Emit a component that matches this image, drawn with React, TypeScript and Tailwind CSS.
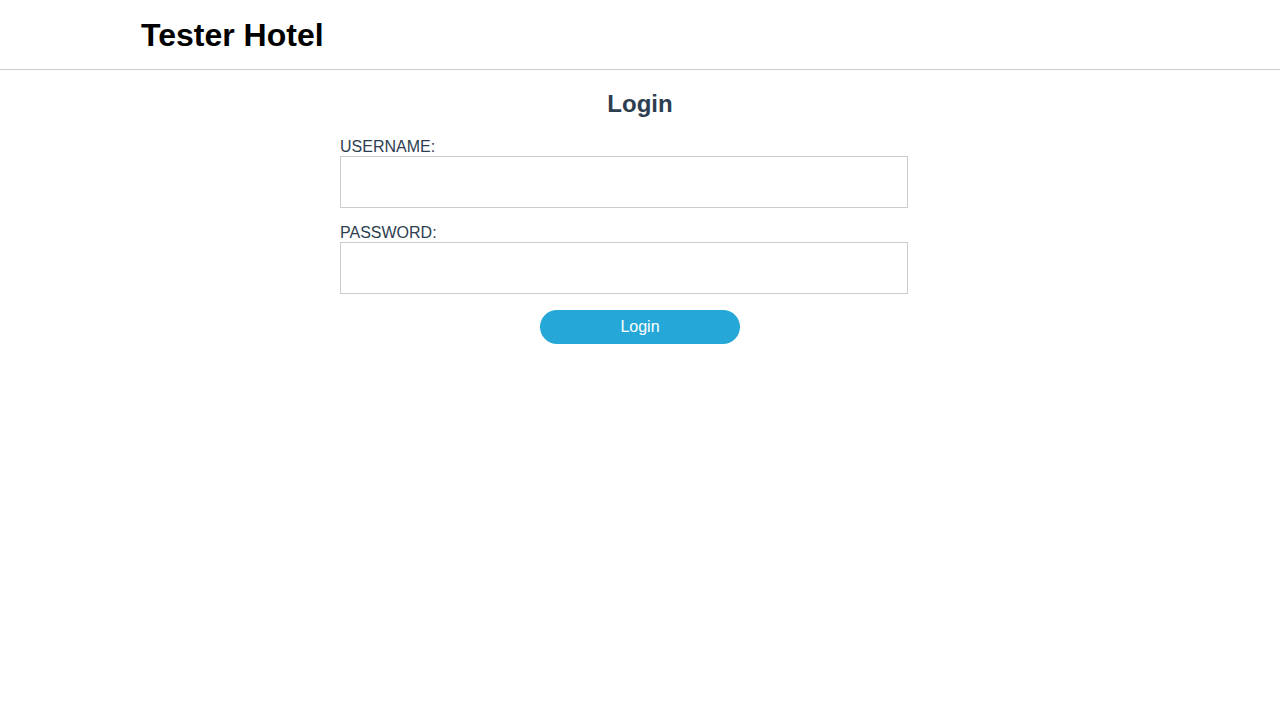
import React from 'react';

const Field = ({ label, type }: { label: string, type: string }) => (
    <div className="flex flex-col">
        <label className="text-[16px] leading-[18px] text-[#2c3e50]">{label}</label>
        <input type={type} className="w-[568px] h-[52px] border border-[#cccccc] bg-white outline-none px-2" />
    </div>
);

export default function App() {
    return (
        <div className="min-h-screen bg-white" style={{ fontFamily: '"Liberation Sans", Arial, sans-serif' }}>
            <header className="h-[70px] border-b border-[#cccccc]">
                <div className="w-[1000px] mx-auto h-full flex items-center">
                    <h1 className="text-[32px] leading-[37px] font-bold text-black ml-[1px] mt-[2px]">Tester Hotel</h1>
                </div>
            </header>
            <main className="w-[600px] mx-auto pt-[20px]">
                <h2 className="text-[24px] leading-[28px] font-bold text-[#2c3e50] text-center">Login</h2>
                <form className="mt-[20px] flex flex-col gap-4" onSubmit={e => e.preventDefault()}>
                    <Field label="USERNAME:" type="text" />
                    <Field label="PASSWORD:" type="password" />
                    <div className="flex justify-center">
                        <button type="submit" className="w-[200px] h-[34px] rounded-full bg-[#25a8d8] text-white text-[16px]">Login</button>
                    </div>
                </form>
            </main>
        </div>
    );
}
